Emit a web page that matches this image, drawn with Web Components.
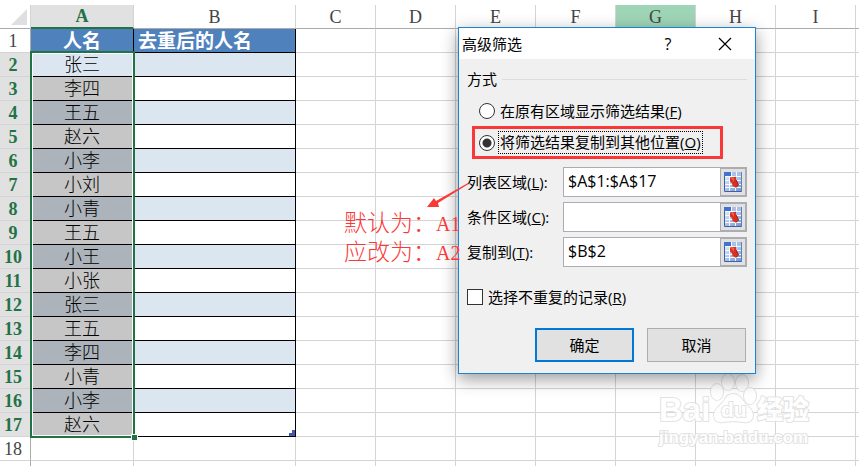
<!DOCTYPE html>
<html lang="zh-CN">
<head>
<meta charset="utf-8">
<meta name="viewport" content="width=device-width, initial-scale=1">
<title>高级筛选</title>
<style>
    html, body {
        margin: 0;
        height: 100%;
        background: white;
    }

    body {
        position: relative;
        overflow: hidden;
        font-family: "Open Sans", "Noto Sans CJK SC", sans-serif;
        font-size: 15px;
        color: black;
    }

    /* windows floating over the sheet */
    filter-dialog {
        position: absolute;
        left: 458px;
        top: 27px;
    }

    note-callout {
        position: absolute;
        left: 344px;
        top: 180px;
    }

    site-watermark {
        position: absolute;
        left: 656px;
        top: 370px;
    }
</style>
</head>
<body>

<sheet-grid></sheet-grid>

<site-watermark></site-watermark>

<filter-dialog heading="高级筛选">
    <option-group legend="方式">
        <radio-option name="mode" key="F">在原有区域显示筛选结果</radio-option>
        <radio-option name="mode" key="O" checked marked>将筛选结果复制到其他位置</radio-option>
    </option-group>
    <range-field key="L" value="$A$1:$A$17">列表区域</range-field>
    <range-field key="C" value="">条件区域</range-field>
    <range-field key="T" value="$B$2">复制到</range-field>
    <check-option key="R">选择不重复的记录</check-option>
    <push-button slot="actions" primary>确定</push-button>
    <push-button slot="actions">取消</push-button>
</filter-dialog>

<note-callout>
    <div>默认为：<span>A1</span></div>
    <div>应改为：<span>A2</span></div>
</note-callout>

<script>
const names = ["张三", "李四", "王五", "赵六", "小李", "小刘", "小青", "王五", "小王", "小张", "张三", "王五", "李四", "小青", "小李", "赵六"];
const columns = ["A", "B", "C", "D", "E", "F", "G", "H", "I", ""];
const lastRow = 19;


class SheetGrid extends HTMLElement {
    constructor() {
        super();
        this.attachShadow({ mode: 'open' });
    }

    connectedCallback() {
        this.render();
    }

    cell(row, col) {
        if (row > 17 || col > 1) return `<td></td>`;
        if (row === 1) return `<td class="data title c${col}">${col === 0 ? "人名" : "去重后的人名"}</td>`;

        const band = row % 2 === 0 ? "even" : "odd";
        let extra = "";
        if (row === 2 && col === 0) extra = `<div class="selection"><i></i></div>`;
        if (row === 17 && col === 1) extra = `<svg class="corner" width="6" height="6" viewBox="0 0 6 6" shape-rendering="crispEdges"><path d="M3 0h3v6H0V3h3z" fill="#4558b0"/></svg>`;
        const active = row === 2 && col === 0 ? "active" : "";
        return `<td class="data c${col} ${band} ${active}">${col === 0 ? names[row - 2] : ""}${extra}</td>`;
    }

    rows() {
        let html = "";
        for (let r = 1; r <= lastRow; r++) {
            const picked = r > 1 && r < 18 ? "picked" : "";
            html += `<tr><th scope="row" class="${picked}">${r < lastRow ? r : ""}</th>`;
            html += columns.map((name, c) => this.cell(r, c)).join("");
            html += `</tr>`;
        }
        return html;
    }

    render() {
        this.shadowRoot.innerHTML = `
            <style>
    :host {
        --row: 24px;
        --green: #217346;
        display: block;
        height: 100%;
        overflow: hidden;
        padding-top: 5px;
        box-sizing: border-box;
        font-family: "Liberation Serif", "Noto Sans CJK SC", serif;
        font-size: 18px;
        line-height: 21px;
    }

    table {
        width: 100%;
        table-layout: fixed;
        border-collapse: separate;
        border-spacing: 0;
    }

    .head { width: 31px; }
    .name { width: 103px; }
    .result { width: 162px; }
    .plain { width: 80px; }
    .rest { width: auto; }

    th, td {
        box-sizing: border-box;
        height: var(--row);
        padding: 2px 0 0;
        border-right: 1px solid #d4d4d4;
        border-bottom: 1px solid #d4d4d4;
        font-weight: 300;
        white-space: nowrap;
    }

    th:last-child, td:last-child {
        border-right: none;
    }

    thead th {
        color: #444;
        border-bottom-color: #ababab;
    }

    thead .picked {
        padding-top: 1px;
        border-bottom: 2px solid var(--green);
    }

    thead .hover {
        background: #9fd5b7;
    }

    thead .all {
        padding: 0;
    }

    tbody th {
        color: #444;
        padding-right: 4px;
        border-right-color: #ababab;
    }

    .picked {
        background: #e1e1e1;
        color: var(--green);
        font-weight: 700;
    }

    .data {
        position: relative;
        border-color: black;
    }

    .c0 { text-align: center; }
    .c1 { padding-left: 4px; }

    .title {
        background: #4f81bd;
        color: white;
        font-size: 19px;
        font-weight: 700;
    }

    .c0.even { background: #acb3ba; }
    .c0.odd { background: #c6c6c6; }
    .c1.even, .c0.active { background: #dce6f1; }

    .selection {
        position: absolute;
        z-index: 1;
        top: -2px;
        left: -1px;
        right: -2px;
        height: calc(var(--row) * 16 + 3px);
        box-sizing: border-box;
        border: 2px solid var(--green);
        box-shadow: inset 0 0 0 1px white;
    }

    .selection i {
        position: absolute;
        right: -5px;
        bottom: -5px;
        width: 5px;
        height: 5px;
        background: var(--green);
        border: 1px solid white;
    }

    .corner {
        position: absolute;
        right: 0;
        bottom: 0;
    }

    .all svg {
        display: block;
        margin: 0 0 0 11px;
    }
            </style>

            <table>
                <colgroup>
                    <col class="head"><col class="name"><col class="result">
                    ${`<col class="plain">`.repeat(7)}
                    <col class="rest">
                </colgroup>
                <thead>
                    <tr>
                        <th class="all"><svg width="16" height="16" viewBox="0 0 16 16"><path d="M16 0v16H0z" fill="#dfdfdf"/></svg></th>
                        ${columns.map(c => `<th scope="col" class="${c === "A" ? "picked" : c === "G" ? "hover" : ""}">${c}</th>`).join("")}
                    </tr>
                </thead>
                <tbody>${this.rows()}</tbody>
            </table>
        `;
    }
}


class FilterDialog extends HTMLElement {
    constructor() {
        super();
        this.attachShadow({ mode: 'open' });
    }

    connectedCallback() {
        this.shadowRoot.innerHTML = `
            <style>
    :host {
        display: block;
        box-sizing: border-box;
        width: 298px;
        border: 1px solid #1883d7;
        background: #f0f0f0;
        box-shadow: 0 5px 16px rgba(0, 0, 0, 0.4);
        line-height: 20px;
    }

    header {
        display: flex;
        align-items: center;
        height: 31px;
        padding: 0 22px 0 3px;
        background: white;
    }

    h1 {
        flex: 1;
        margin: 0;
        font-size: 15px;
        font-weight: 400;
    }

    header button {
        display: flex;
        align-items: center;
        justify-content: center;
        width: 16px;
        height: 24px;
        padding: 0;
        border: none;
        background: none;
        font: inherit;
        font-size: 16px;
        color: black;
    }

    header button + button {
        margin-left: 41px;
    }

    .body {
        display: flex;
        flex-direction: column;
        gap: 5px;
        padding: 10px 8px 0;
    }

    footer {
        display: flex;
        justify-content: flex-end;
        gap: 13px;
        padding: 21px 9px 11px;
    }
            </style>

            <div role="dialog" aria-labelledby="title">
                <header>
                    <h1 id="title">${this.getAttribute("heading")}</h1>
                    <button type="button" aria-label="帮助">?</button>
                    <button type="button" aria-label="关闭"><svg width="14" height="14" viewBox="0 0 14 14"><path d="M1 1l12 12M13 1L1 13" stroke="black" stroke-width="1.2"/></svg></button>
                </header>
                <div class="body"><slot></slot></div>
                <footer><slot name="actions"></slot></footer>
            </div>
        `;
    }
}


class OptionGroup extends HTMLElement {
    constructor() {
        super();
        this.attachShadow({ mode: 'open' });
    }

    connectedCallback() {
        this.shadowRoot.innerHTML = `
            <style>
    :host {
        display: block;
        margin-bottom: 3px;
    }

    .legend {
        display: flex;
        align-items: center;
        gap: 5px;
        margin-bottom: 12px;
    }

    .legend::after {
        content: "";
        flex: 1;
        border-top: 1px solid #dcdcdc;
    }

    .options {
        display: flex;
        flex-direction: column;
        align-items: flex-start;
        gap: 5px;
        padding: 0 24px 0 5px;
    }
            </style>

            <div role="radiogroup" aria-labelledby="legend">
                <div class="legend" id="legend">${this.getAttribute("legend")}</div>
                <div class="options"><slot></slot></div>
            </div>
        `;
    }
}


class RadioOption extends HTMLElement {
    constructor() {
        super();
        this.attachShadow({ mode: 'open' });
    }

    connectedCallback() {
        const checked = this.hasAttribute("checked") ? "checked" : "";
        this.shadowRoot.innerHTML = `
            <style>
    :host {
        display: block;
        box-sizing: border-box;
        width: 100%;
        padding-left: 7px;
    }

    :host([marked]) {
        padding: 2px 4px;
        border: 3px solid #fb3838;
    }

    label {
        display: flex;
        align-items: center;
        gap: 3px;
    }

    input {
        appearance: none;
        flex: none;
        width: 16px;
        height: 16px;
        margin: 0;
        border: 1px solid #333;
        border-radius: 50%;
        background: white;
    }

    input:checked {
        background: radial-gradient(circle, #333 4px, white 5px);
    }

    span {
        padding: 0 1px;
        border: 1px solid transparent;
        line-height: 18px;
        white-space: nowrap;
    }

    :host([marked]) span {
        border: 1px dotted black;
        line-height: 21px;
    }
            </style>

            <label>
                <input type="radio" name="${this.getAttribute("name")}" ${checked}>
                <span><slot></slot>(<u>${this.getAttribute("key")}</u>)</span>
            </label>
        `;
        this.shadowRoot.querySelector("input").addEventListener('change', this.clearOthers.bind(this));
    }

    // radios in separate shadow roots do not share a group
    clearOthers() {
        this.parentElement.querySelectorAll("radio-option").forEach(el => {
            if (el !== this) el.shadowRoot.querySelector("input").checked = false;
        });
    }
}


class RangeField extends HTMLElement {
    constructor() {
        super();
        this.attachShadow({ mode: 'open' });
    }

    connectedCallback() {
        this.shadowRoot.innerHTML = `
            <style>
    :host {
        display: flex;
        align-items: center;
    }

    label {
        flex: none;
        width: 96px;
        white-space: nowrap;
    }

    .box {
        flex: 1;
        min-width: 0;
        display: flex;
        box-sizing: border-box;
        height: 30px;
        border: 1px solid #abadb3;
        background: white;
    }

    input {
        flex: 1;
        min-width: 0;
        padding: 0 4px 2px;
        border: none;
        outline: none;
        background: none;
        font: inherit;
        font-size: 16px;
        color: black;
    }

    button {
        flex: none;
        display: flex;
        align-items: center;
        justify-content: center;
        width: 26px;
        padding: 0;
        border: 1px solid #abadb3;
        background: #e1e1e1;
    }
            </style>

            <label for="range"><slot></slot>(<u>${this.getAttribute("key")}</u>):</label>
            <div class="box">
                <input id="range" type="text" value="${this.getAttribute("value")}">
                <button type="button" aria-label="选择区域">
                    <svg width="18" height="20" viewBox="0 0 18 20">
                        <defs>
                            <linearGradient id="g" x1="0" y1="0" x2="1" y2="1">
                                <stop offset="0" stop-color="#dce9fb"/>
                                <stop offset="1" stop-color="#7594d4"/>
                            </linearGradient>
                        </defs>
                        <path d="M0 0h18v20H0z" fill="#f6faff"/>
                        <path d="M1 5h4v3H1zM1 9h4v3H1zM1 13h4v2H1zM1 16h4v3H1zM6 5h5v3H6zM6 9h5v3H6zM6 13h5v2H6zM6 16h5v3H6zM12 5h5v3h-5zM12 9h5v3h-5zM12 13h5v2h-5zM12 16h5v3h-5z" fill="url(#g)"/>
                        <path d="M0 0h7v4H0z" fill="#3f74cc"/>
                        <path d="M8 0h4v4H8zM13 0h5v4h-5z" fill="#a9c0ea"/>
                        <path d="M.5 4v15.500H18" fill="none" stroke="#3c62a4"/>
                        <path d="M17.500 0v20" stroke="#5f80bd"/>
                        <path d="M6 5.500l6-.8v3l1 1.300 1.500 4-2.500 2.500-3.500-1.500-.5-3L6 9.500z" fill="#d93020"/>
                        <path d="M7 6l3-.3v4z" fill="#f0644c"/>
                        <path d="M12 8l2.500 5-2.500 2.500" fill="none" stroke="#9c1c16"/>
                    </svg>
                </button>
            </div>
        `;
    }
}


class CheckOption extends HTMLElement {
    constructor() {
        super();
        this.attachShadow({ mode: 'open' });
    }

    connectedCallback() {
        this.shadowRoot.innerHTML = `
            <style>
    :host {
        display: block;
        margin-top: 15px;
    }

    label {
        display: flex;
        align-items: center;
        gap: 5px;
    }

    input {
        appearance: none;
        width: 16px;
        height: 16px;
        margin: 0;
        border: 1px solid #333;
        background: white;
    }

    input:checked {
        background: #333;
        box-shadow: inset 0 0 0 3px white;
    }
            </style>

            <label><input type="checkbox"><span><slot></slot>(<u>${this.getAttribute("key")}</u>)</span></label>
        `;
    }
}


class PushButton extends HTMLElement {
    constructor() {
        super();
        this.attachShadow({ mode: 'open' });
    }

    connectedCallback() {
        this.shadowRoot.innerHTML = `
            <style>
    :host {
        display: block;
        width: 99px;
    }

    button {
        width: 100%;
        height: 34px;
        padding: 0;
        border: 1px solid #adadad;
        background: #e1e1e1;
        font: inherit;
        color: black;
    }

    :host([primary]) button {
        border: 2px solid #0078d7;
    }
            </style>

            <button type="button"><slot></slot></button>
        `;
    }
}


class NoteCallout extends HTMLElement {
    constructor() {
        super();
        this.attachShadow({ mode: 'open' });
    }

    connectedCallback() {
        this.shadowRoot.innerHTML = `
            <style>
    :host {
        display: block;
        color: #fb3838;
        font-family: "Liberation Serif", "Noto Sans CJK SC", serif;
        font-size: 23px;
        font-weight: 300;
        line-height: 29px;
        white-space: nowrap;
        pointer-events: none;
    }

    svg {
        display: block;
        margin-left: 82px;
    }

    ::slotted(div) {
        height: 29px;
    }
            </style>

            <svg width="44" height="29" viewBox="0 0 44 29"><path d="M1 27l7-9 2 3L42 3l.5 1L12 23l1 4z" fill="#fb3838"/></svg>
            <slot></slot>
        `;
        this.querySelectorAll("span").forEach(el => el.style.fontSize = "20px");
    }
}


class SiteWatermark extends HTMLElement {
    constructor() {
        super();
        this.attachShadow({ mode: 'open' });
    }

    connectedCallback() {
        this.shadowRoot.innerHTML = `
            <style>
    :host {
        display: block;
        pointer-events: none;
    }

    svg {
        display: block;
        overflow: visible;
        fill: white;
        stroke: #e0e0e0;
        stroke-width: 2;
        stroke-linejoin: round;
        paint-order: stroke;
        opacity: 0.9;
    }

    .brand { font: 700 33px "Liberation Sans", sans-serif; }
    .du { font: 700 21px "Liberation Sans", sans-serif; }
    .cjk { font: 900 26px "Noto Sans CJK SC", sans-serif; }
    .url { font: 600 17px "Liberation Sans", sans-serif; }
            </style>

            <svg width="160" height="80" viewBox="0 0 160 80">
                <text class="brand" x="3" y="51">Bai</text>
                <ellipse cx="72" cy="12" rx="6" ry="8"/>
                <ellipse cx="86" cy="13" rx="6" ry="8"/>
                <ellipse cx="61" cy="22" rx="6" ry="8"/>
                <ellipse cx="94" cy="26" rx="6" ry="8"/>
                <path d="M77 24c6 0 8 4 11 8 4 5 9 8 9 13 0 6-5 8-10 7-6-1-14-1-20 0-6 1-9-2-9-7 0-6 6-9 9-13s4-8 10-8z"/>
                <text class="du" x="65" y="47">du</text>
                <text class="cjk" x="101" y="49">经验</text>
                <text class="url" x="3" y="73">jingyan.baidu.com</text>
            </svg>
        `;
    }
}

customElements.define('sheet-grid', SheetGrid);
customElements.define('filter-dialog', FilterDialog);
customElements.define('option-group', OptionGroup);
customElements.define('radio-option', RadioOption);
customElements.define('range-field', RangeField);
customElements.define('check-option', CheckOption);
customElements.define('push-button', PushButton);
customElements.define('note-callout', NoteCallout);
customElements.define('site-watermark', SiteWatermark);
</script>
</body>
</html>
